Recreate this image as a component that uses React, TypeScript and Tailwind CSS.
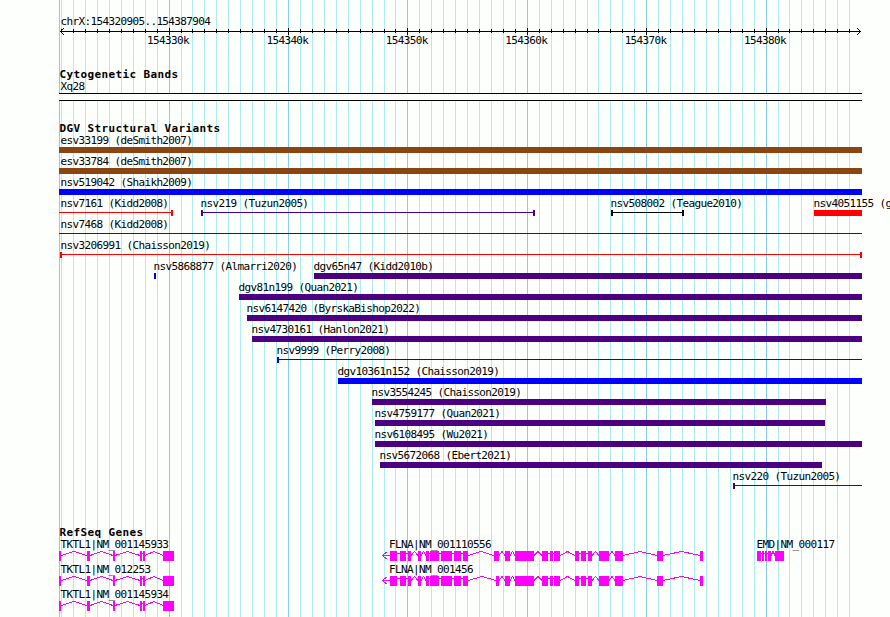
import clsx from "clsx";

type Feature = {
  label: string;
  start: number;
  end: number;
  color: string;
  kind?: "bar" | "line";
  capLeft?: boolean;
  capRight?: boolean;
};

type Gene = { label: string; exons: number[][]; arrow?: boolean };

const ORIGIN = 59;
const END = 862;

const BROWN = "bg-[#8b4513]";
const BLUE = "bg-[#0000ff]";
const INDIGO = "bg-[#4b0082]";
const RED = "bg-[#ff0000]";
const BLACK = "bg-black";

// one grid line per 1000 bases, a major one every 10000
const ticks = Array.from({ length: 67 }, (_, i) => ({
  x: Math.floor(61.64 + 11.94 * i),
  major: i % 10 === 9,
}));

const scaleLabels = ["154330k", "154340k", "154350k", "154360k", "154370k", "154380k"];

const variants: Feature[][] = [
  [{ label: "esv33199 (deSmith2007)", start: 59, end: END, color: BROWN }],
  [{ label: "esv33784 (deSmith2007)", start: 59, end: END, color: BROWN }],
  [{ label: "nsv519042 (Shaikh2009)", start: 59, end: END, color: BLUE }],
  [
    { label: "nsv7161 (Kidd2008)", start: 59, end: 173, color: RED, kind: "line", capRight: true },
    { label: "nsv219 (Tuzun2005)", start: 201, end: 535, color: INDIGO, kind: "line", capLeft: true, capRight: true },
    { label: "nsv508002 (Teague2010)", start: 611, end: 684, color: BLACK, kind: "line", capLeft: true, capRight: true },
    { label: "nsv4051155 (g", start: 814, end: END, color: RED },
  ],
  [{ label: "nsv7468 (Kidd2008)", start: 59, end: END, color: INDIGO, kind: "line" }],
  [{ label: "nsv3206991 (Chaisson2019)", start: 60, end: END, color: RED, kind: "line", capLeft: true, capRight: true }],
  [
    { label: "nsv5868877 (Almarri2020)", start: 154, end: 156, color: BLUE },
    { label: "dgv65n47 (Kidd2010b)", start: 314, end: END, color: INDIGO },
  ],
  [{ label: "dgv81n199 (Quan2021)", start: 239, end: END, color: INDIGO }],
  [{ label: "nsv6147420 (ByrskaBishop2022)", start: 247, end: END, color: INDIGO }],
  [{ label: "nsv4730161 (Hanlon2021)", start: 252, end: END, color: INDIGO }],
  [{ label: "nsv9999 (Perry2008)", start: 277, end: END, color: BLUE, kind: "line", capLeft: true }],
  [{ label: "dgv10361n152 (Chaisson2019)", start: 338, end: END, color: BLUE }],
  [{ label: "nsv3554245 (Chaisson2019)", start: 372, end: 826, color: INDIGO }],
  [{ label: "nsv4759177 (Quan2021)", start: 375, end: 825, color: INDIGO }],
  [{ label: "nsv6108495 (Wu2021)", start: 375, end: END, color: INDIGO }],
  [{ label: "nsv5672068 (Ebert2021)", start: 380, end: 822, color: INDIGO }],
  [{ label: "nsv220 (Tuzun2005)", start: 733, end: END, color: INDIGO, kind: "line", capLeft: true }],
];

// exons are [x, width]
const tktl1 = [[59, 2], [87, 3], [113, 2], [140, 2], [143, 2], [163, 11]];
const flnaHead = [[390, 7], [400, 6], [408, 3], [418, 3], [426, 3], [430, 9], [441, 11], [454, 7], [463, 5]];
const flnaTail = [
  [505, 5], [515, 19], [542, 6], [550, 3], [554, 6], [575, 4], [581, 5],
  [588, 4], [599, 10], [615, 8], [657, 6], [700, 3],
];
const emd = [[757, 4], [762, 2], [765, 2], [768, 3], [775, 9]];

const genes: Gene[][] = [
  [
    { label: "TKTL1|NM_001145933", exons: tktl1 },
    { label: "FLNA|NM_001110556", exons: [...flnaHead, [494, 5], ...flnaTail], arrow: true },
    { label: "EMD|NM_000117", exons: emd },
  ],
  [
    { label: "TKTL1|NM_012253", exons: tktl1 },
    { label: "FLNA|NM_001456", exons: [...flnaHead, [496, 3], ...flnaTail], arrow: true },
  ],
  [{ label: "TKTL1|NM_001145934", exons: tktl1 }],
];

function Label({ children, className }: { children: string; className?: string }) {
  return (
    <span
      className={clsx(
        "block h-[13px] text-[11px] leading-[14px] tracking-[-0.63px] whitespace-pre",
        className
      )}
    >
      {children}
    </span>
  );
}

function Title({ children }: { children: string }) {
  return (
    <h2 className="h-3 pl-[0.5px] text-[11px] leading-[14px] font-bold tracking-[0.378px] whitespace-pre">
      {children}
    </h2>
  );
}

function Grid() {
  return (
    <svg className="absolute inset-0" width="890" height="617" shapeRendering="crispEdges">
      <rect x={ORIGIN} y="0" width="1" height="617" fill="#87ceeb" />
      {ticks.map((t) => (
        <rect key={t.x} x={t.x} y="0" width="1" height="617" fill={t.major ? "#87ceeb" : "#afeeee"} />
      ))}
    </svg>
  );
}

function Ruler() {
  return (
    <svg className="block" width="803" height="7" viewBox="59 0 803 7" shapeRendering="crispEdges">
      <rect x="60" y="3" width="801" height="1" />
      {ticks.map((t) => (
        <rect key={t.x} x={t.x} y={t.major ? 0 : 1} width="1" height={t.major ? 7 : 4} />
      ))}
      {[1, 2, 3].map((d) => (
        <g key={d}>
          <rect x={60 + d} y={3 - d} width="1" height="1" />
          <rect x={60 + d} y={3 + d} width="1" height="1" />
          <rect x={860 - d} y={3 - d} width="1" height="1" />
          <rect x={860 - d} y={3 + d} width="1" height="1" />
        </g>
      ))}
    </svg>
  );
}

function Variant({ f }: { f: Feature }) {
  return (
    <div
      className="absolute flex flex-col"
      style={{ left: f.start - ORIGIN, width: f.end - f.start }}
    >
      <Label className={f.start === ORIGIN ? "pl-[1.5px]" : f.start === 60 ? "pl-[0.5px]" : "-ml-[0.5px]"}>
        {f.label}
      </Label>
      {f.kind === "line" ? (
        <div className="flex h-1.5">
          {f.capLeft && <i className={clsx("w-0.5", f.color)} />}
          <i className={clsx("mt-0.5 h-px flex-1", f.color)} />
          {f.capRight && <i className={clsx("w-0.5", f.color)} />}
        </div>
      ) : (
        <div className={clsx("h-1.5", f.color)} />
      )}
    </div>
  );
}

function GeneModel({ gene }: { gene: Gene }) {
  // leave room on the left for the strand arrow
  const left = gene.exons[0][0] - (gene.arrow ? 8 : 0);
  const last = gene.exons[gene.exons.length - 1];
  const width = last[0] + last[1] - left;
  return (
    <div className="absolute" style={{ left: left - ORIGIN, width }}>
      <Label className={gene.arrow ? "pl-[7px]" : left === ORIGIN ? "pl-[1.5px]" : "-ml-[0.5px]"}>
        {gene.label}
      </Label>
      <svg className="block" width={width} height="10" viewBox={`${left} 0 ${width} 10`} shapeRendering="crispEdges">
        {gene.exons.map(([x, w], i) => {
          const next = gene.exons[i + 1];
          const from = x + w;
          const gap = next ? next[0] - from : 0;
          return (
            <g key={x}>
              <rect x={x} y="0" width={w} height="10" fill="#ff00ff" />
              {gap > 0 && gap < 4 && <rect x={from} y="2" width={gap} height="1" fill="#ff00ff" />}
              {gap >= 4 && (
                <polyline
                  points={`${from},4.5 ${from + gap / 2},0.5 ${from + gap},4.5`}
                  fill="none"
                  stroke="#ff00ff"
                />
              )}
            </g>
          );
        })}
        {gene.arrow && (
          <path d="M390 4.5H382.5M386.5 1L382.5 4.5L386.5 8" fill="none" stroke="#ff00ff" />
        )}
      </svg>
    </div>
  );
}

export default function App() {
  return (
    <main className="relative h-[617px] w-[890px] overflow-hidden bg-[#fdfffc] font-['DejaVu_Sans_Mono',monospace] text-black">
      <Grid />
      <div className="relative ml-[59px] flex w-[803px] flex-col">
        <header className="h-[68px] pt-[15px]">
          <Label className="pl-[1.5px]">chrX:154320905..154387904</Label>
          <Ruler />
          <div className="-mt-px flex w-[727px] justify-between pl-[88px]">
            {scaleLabels.map((text) => (
              <Label key={text}>{text}</Label>
            ))}
          </div>
        </header>

        <section className="h-[54px]">
          <Title>Cytogenetic Bands</Title>
          <Label className="pl-[1.5px]">Xq28</Label>
          <div className="h-2 border-y border-black bg-[#fdfffc]" />
        </section>

        <section className="h-[404px]">
          <Title>DGV Structural Variants</Title>
          {variants.map((row) => (
            <div key={row[0].label} className="relative h-[21px]">
              {row.map((f) => (
                <Variant key={f.label} f={f} />
              ))}
            </div>
          ))}
        </section>

        <section>
          <Title>RefSeq Genes</Title>
          {genes.map((row) => (
            <div key={row[0].label} className="relative h-[25px]">
              {row.map((g) => (
                <GeneModel key={g.label} gene={g} />
              ))}
            </div>
          ))}
        </section>
      </div>
    </main>
  );
}
